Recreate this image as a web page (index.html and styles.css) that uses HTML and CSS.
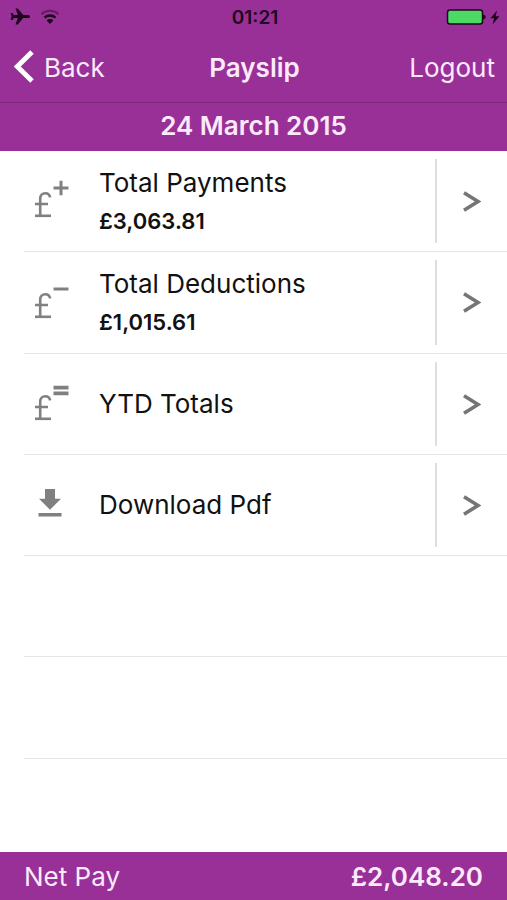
FILE: index.html
```html
<!DOCTYPE html>
<html lang="en">
<head>
<meta charset="utf-8">
<meta name="viewport" content="width=device-width, initial-scale=1">
<title>Payslip</title>
<link rel="stylesheet" href="styles.css">
</head>
<body>
<div class="app">
  <header class="top">
    <div class="status">
      <div class="status-left">
        <svg width="20" height="18" viewBox="0 0 20 18" aria-hidden="true"><path fill="currentColor" d="M20 8.500c0-1-1-1.500-2.200-1.500h-4.600L7.800.6H5.500l2.400 6.400H4L2.300 4.900H.6L1.600 8.500.6 12.100h1.700L4 10h3.900l-2.400 6.400h2.300l5.400-6.400h4.600C19 10 20 9.500 20 8.500z"/></svg>
        <svg width="20" height="16" viewBox="0 0 20 16" fill="none" stroke="currentColor" stroke-width="2" aria-hidden="true"><path d="M1.500 5.200a12.500 12.500 0 0 1 17 0" opacity=".45"/><path stroke-width="2.400" d="M4.500 8.600a8.300 8.300 0 0 1 11 0"/><path d="M6.600 11.400a4.800 4.800 0 0 1 6.800 0L10 15z" fill="currentColor" stroke="none"/></svg>
      </div>
      <span class="time">01:21</span>
      <div class="status-right">
        <svg width="40" height="16" viewBox="0 0 40 16" aria-hidden="true"><rect x="1.500" y="1" width="35" height="14" rx="2.500" fill="#4cd964" stroke="currentColor" stroke-width="1.500"/><path fill="currentColor" d="M37 5.500c2 .4 2.600 1.200 2.600 2.500s-.6 2.100-2.600 2.500z"/></svg>
        <svg width="10" height="15" viewBox="0 0 10 15" aria-hidden="true"><path fill="currentColor" d="M7 .5.500 8.300h3.700L2.500 14.500 9.500 6.200H5.700z"/></svg>
      </div>
    </div>
    <nav class="nav">
      <button class="nav-btn back" type="button">
        <svg width="20" height="34" viewBox="0 0 20 34" fill="none" stroke="#fff" stroke-width="5" aria-hidden="true"><path d="M18 2 3.200 16.500 18 31"/></svg>
        Back
      </button>
      <h1 class="title">Payslip</h1>
      <button class="nav-btn logout" type="button">Logout</button>
    </nav>
  </header>
  <h2 class="date">24 March 2015</h2>
  <ul class="list">
    <li class="row">
      <a class="item" href="#payments">
        <svg class="icon" width="36" height="40" viewBox="0 0 36 40" fill="none" stroke="currentColor" aria-hidden="true"><path stroke-width="2.600" d="M17.200 16.400c-.6-2.700-2.200-4.100-4.800-4.100-3 0-5.200 1.900-5.200 5.200v17.500M2 23h13"/><path stroke-width="2.600" d="M2 34.800h16"/><path stroke-width="3" d="M20.500 7h15M28-.2v14.400"/></svg>
        <span class="text"><span class="label">Total Payments</span><strong class="amount">£3,063.81</strong></span>
        <span class="more"><svg width="18" height="22" viewBox="0 0 18 22" fill="none" stroke="currentColor" stroke-width="3.600" aria-hidden="true"><path d="M1 2.800 15 11.500 1 20.200"/></svg></span>
      </a>
    </li>
    <li class="row">
      <a class="item" href="#deductions">
        <svg class="icon" width="36" height="40" viewBox="0 0 36 40" fill="none" stroke="currentColor" aria-hidden="true"><path stroke-width="2.600" d="M17.200 16.400c-.6-2.700-2.200-4.100-4.800-4.100-3 0-5.200 1.900-5.200 5.200v17.500M2 23h13"/><path stroke-width="2.600" d="M2 34.800h16"/><path stroke-width="3" d="M20.500 7h15"/></svg>
        <span class="text"><span class="label">Total Deductions</span><strong class="amount">£1,015.61</strong></span>
        <span class="more"><svg width="18" height="22" viewBox="0 0 18 22" fill="none" stroke="currentColor" stroke-width="3.600" aria-hidden="true"><path d="M1 2.800 15 11.500 1 20.200"/></svg></span>
      </a>
    </li>
    <li class="row">
      <a class="item" href="#ytd">
        <svg class="icon" width="36" height="40" viewBox="0 0 36 40" fill="none" stroke="currentColor" aria-hidden="true"><path stroke-width="2.600" d="M17.200 16.400c-.6-2.700-2.200-4.100-4.800-4.100-3 0-5.200 1.900-5.200 5.200v17.500M2 23h13"/><path stroke-width="2.600" d="M2 34.800h16"/><path stroke-width="3.800" d="M20.500 3.600h15M20.500 9.400h15"/></svg>
        <span class="text"><span class="label">YTD Totals</span></span>
        <span class="more"><svg width="18" height="22" viewBox="0 0 18 22" fill="none" stroke="currentColor" stroke-width="3.600" aria-hidden="true"><path d="M1 2.800 15 11.500 1 20.200"/></svg></span>
      </a>
    </li>
    <li class="row">
      <a class="item" href="#download">
        <svg class="icon" width="36" height="40" viewBox="0 0 36 40" fill="currentColor" aria-hidden="true"><path d="M12 4h10v9.700h6L17 24.700 6 13.700h6zM5.500 28h23v3.500h-23z"/></svg>
        <span class="text"><span class="label">Download Pdf</span></span>
        <span class="more"><svg width="18" height="22" viewBox="0 0 18 22" fill="none" stroke="currentColor" stroke-width="3.600" aria-hidden="true"><path d="M1 2.800 15 11.500 1 20.200"/></svg></span>
      </a>
    </li>
    <li class="row" aria-hidden="true"></li>
    <li class="row" aria-hidden="true"></li>
  </ul>
  <footer class="net">
    <span>Net Pay</span>
    <strong class="net-amount">£2,048.20</strong>
  </footer>
</div>
</body>
</html>
```
FILE: styles.css
```css
* {
  box-sizing: border-box;
}

body {
  margin: 0;
  background: #fff;
  color: #111;
  font-family: Inter, "Liberation Sans", sans-serif;
}

.app {
  display: flex;
  flex-direction: column;
  min-height: 100vh;
}

.top,
.date,
.net {
  background: #983097;
  color: #fceafc;
}

.top {
  border-bottom: 1px solid #83267f;
}

.status,
.nav {
  display: grid;
  grid-template-columns: 1fr auto 1fr;
  align-items: center;
}

.status {
  height: 34px;
  padding: 0 7px 0 10px;
  color: #1c071c;
}

.status-left,
.status-right {
  display: flex;
  align-items: center;
  gap: 10px;
}

.status-right {
  justify-content: flex-end;
  gap: 4px;
}

.time {
  font-size: 19px;
  font-weight: 600;
}

.nav {
  height: 68px;
  padding: 0 12px 2px 14px;
}

.nav-btn {
  display: flex;
  align-items: center;
  gap: 10px;
  padding: 0;
  border: 0;
  background: none;
  color: inherit;
  font: inherit;
  font-size: 26px;
  cursor: pointer;
}

.logout {
  justify-self: end;
}

.title,
.date {
  margin: 0;
  font-size: 26px;
  font-weight: 600;
}

.date {
  height: 48px;
  line-height: 46px;
  text-align: center;
}

.list {
  flex: 1;
  display: grid;
  grid-template-rows: repeat(6, 13fr) 12fr;
  margin: 0;
  padding: 0;
  list-style: none;
}

.row {
  display: flex;
  margin-left: 24px;
  border-bottom: 1px solid #e6e6e6;
}

.item {
  flex: 1;
  display: flex;
  align-items: center;
  color: inherit;
  text-decoration: none;
}

.icon {
  margin: 0 30px 0 9px;
  overflow: visible;
  color: #808080;
}

.text {
  flex: 1;
  display: flex;
  flex-direction: column;
  gap: 8px;
}

.label {
  font-size: 26px;
  line-height: 32px;
}

.amount {
  font-size: 22px;
  line-height: 28px;
  font-weight: 600;
}

.more {
  display: flex;
  align-items: center;
  align-self: stretch;
  width: 72px;
  margin: 8px 0;
  padding-left: 26px;
  border-left: 2px solid #dedede;
  color: #757575;
}

.net {
  display: flex;
  align-items: center;
  justify-content: space-between;
  height: 48px;
  padding: 0 24px;
  font-size: 26px;
}

.net-amount {
  font-weight: 600;
}
```
